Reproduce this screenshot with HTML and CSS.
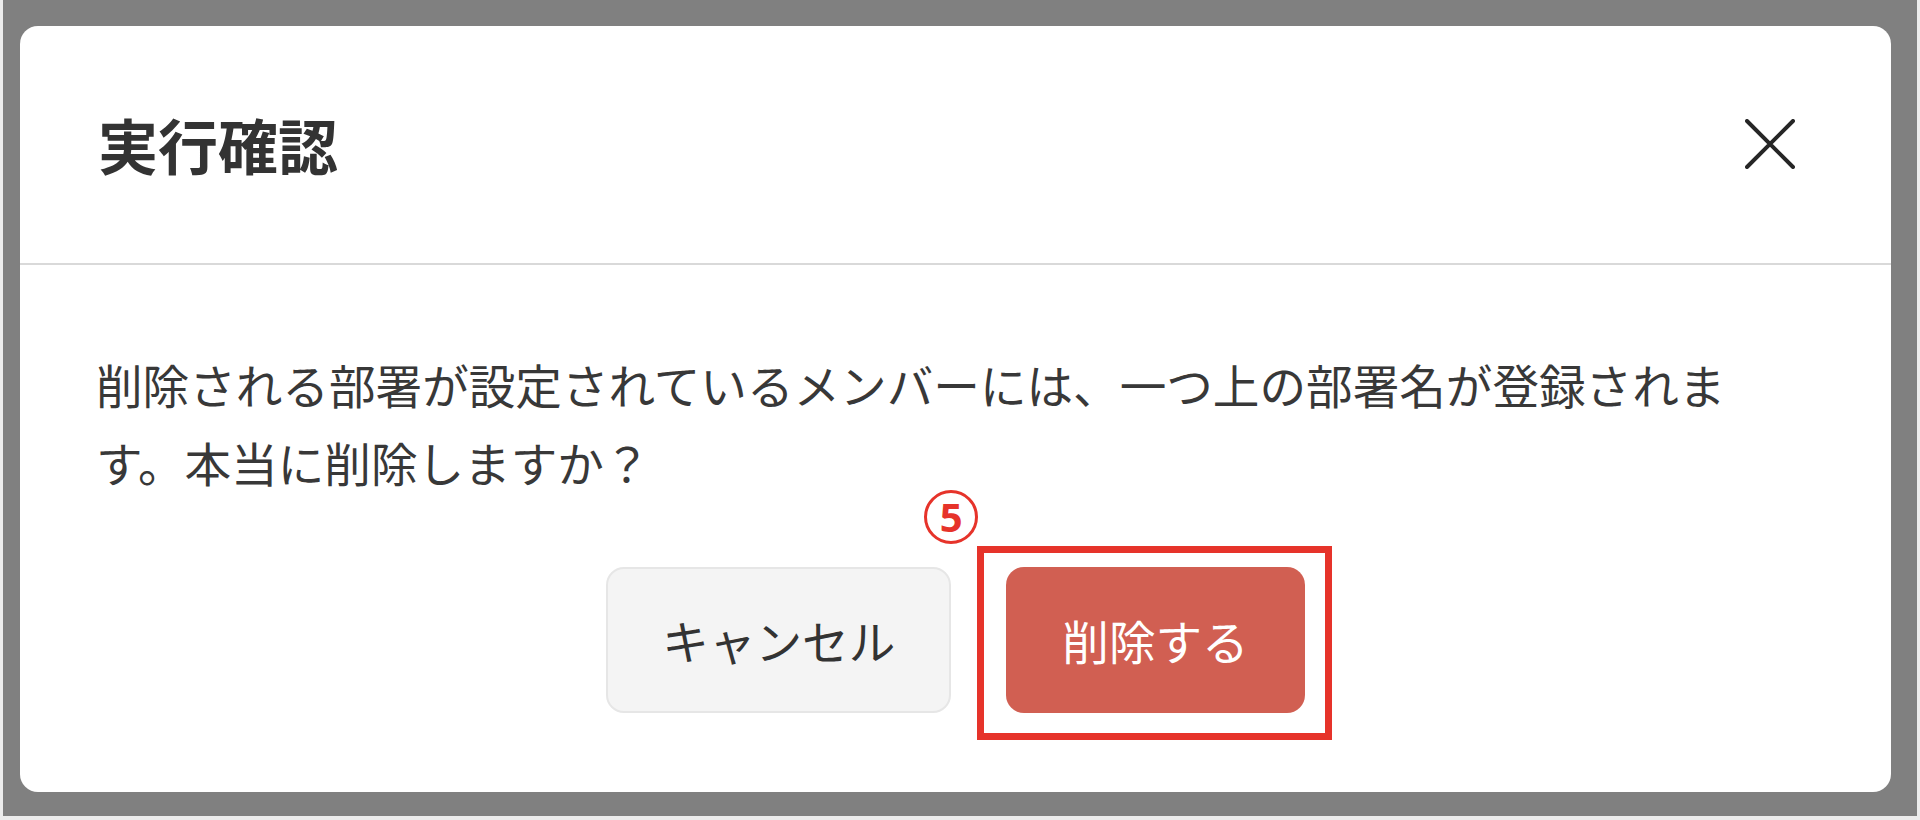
FILE: index.html
```html
<html>
   <head>
      <meta charset="UTF-8">
      <title>実行確認</title>
      <link rel="stylesheet" href="styles.css">
   </head>
   <body>
      <div class="backdrop">
         <div class="dialog">
            <div class="dialog__header">
               <h2 class="dialog__title">実行確認</h2>
               <span class="btn__close">
                  <svg width="50" height="50" viewBox="0 0 50 50">
                     <path d="M2 2 L48 48 M48 2 L2 48" stroke="#262626" stroke-width="4" stroke-linecap="round" fill="none"/>
                  </svg>
               </span>
            </div>
            <div class="dialog__body">
               <p>削除される部署が設定されているメンバーには、一つ上の部署名が登録されます。本当に削除しますか？</p>
               <div class="dialog__footer">
                  <span class="btn btn--cancel">キャンセル</span>
                  <span class="mark">
                     <span class="mark__num">5</span>
                     <span class="btn btn--delete">削除する</span>
                  </span>
               </div>
            </div>
         </div>
      </div>
   </body>
</html>
```

FILE: styles.css
```css
* {
  box-sizing: border-box;
}
body {
    margin: 0;
    background-color: #ececec;
    font-family: "Noto Sans CJK JP", sans-serif;
    color: #333;
}
/* gray overlay behind the dialog */
.backdrop {
    margin: 0 3px;
    height: 816px;
    background-color: #808080;
    padding: 26px 26px 0 17px;
}
.dialog {
    height: 766px;
    background-color: #fff;
    border-radius: 18px;
}
.dialog__header {
    height: 239px;
    border-bottom: 2px solid #d9d9d9;
    display: flex;
    align-items: center;
    justify-content: space-between;
    padding: 0 96px 2px 78px;
}
.dialog__title {
    margin: 0;
    font-size: 60px;
    font-weight: 700;
    color: #333;
}
.btn__close {
    display: flex;
    cursor: pointer;
}
.dialog__body {
    padding: 80px 140px 0 76px;
    font-size: 46.6px;
    line-height: 78px;
    color: #383838;
}
.dialog__body p {
    margin: 0;
}
.dialog__footer {
    display: flex;
    justify-content: center;
    gap: 55px;
    margin: 66px -140px 0 -76px;
}
.btn {
    display: flex;
    align-items: center;
    height: 146px;
    padding: 0 56px;
    border-radius: 18px;
    cursor: pointer;
}
.btn--cancel {
    padding: 0 54px;
    background: #f4f4f4;
    border: 2px solid #e6e6e6;
    color: #333;
}
.btn--delete {
    background: #d15f52;
    color: #fff;
}
/* red annotation around the delete button */
.mark {
    position: relative;
    display: flex;
}
.mark::after {
    content: "";
    position: absolute;
    top: -21px;
    left: -29px;
    right: -27px;
    bottom: -27px;
    border: 7px solid #e6332a;
}
.mark__num {
    position: absolute;
    left: -82px;
    top: -77px;
    width: 54px;
    height: 54px;
    border: 3px solid #e6332a;
    border-radius: 50%;
    color: #e6332a;
    font-family: "Noto Sans", sans-serif;
    font-weight: 700;
    font-size: 40px;
    line-height: 48px;
    text-align: center;
}
```
